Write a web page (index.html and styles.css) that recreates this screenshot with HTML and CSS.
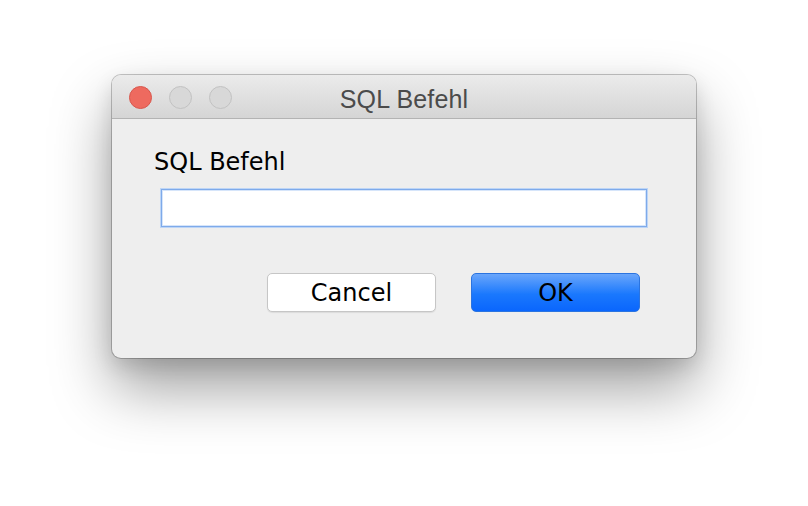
FILE: index.html
```html
<!DOCTYPE html>
<html>
<head>
<meta charset="utf-8">
<link rel="stylesheet" href="styles.css">
</head>
<body>
<div class="window">
  <div class="titlebar">
    <div class="lights">
      <span class="light close"></span>
      <span class="light off"></span>
      <span class="light off"></span>
    </div>
    <div class="title">SQL Befehl</div>
  </div>
  <div class="content">
    <div class="label">SQL Befehl</div>
    <div class="field"></div>
    <div class="buttons">
      <button class="btn cancel">Cancel</button>
      <button class="btn ok">OK</button>
    </div>
  </div>
</div>
</body>
</html>
```
FILE: styles.css
```css
html, body {
  margin: 0;
  padding: 0;
  background: #ffffff;
}
body {
  width: 808px;
  height: 506px;
  overflow: hidden;
  display: flex;
  justify-content: center;
  align-items: flex-start;
  padding-top: 75px;
  box-sizing: border-box;
}
.window {
  width: 584px;
  height: 283px;
  background: #eeeeee;
  border-radius: 9px;
  box-shadow: 0 0 0 1px rgba(0,0,0,0.22), 0 30px 60px rgba(0,0,0,0.38), 0 8px 20px rgba(0,0,0,0.12);
  display: flex;
  flex-direction: column;
  overflow: hidden;
}
.titlebar {
  position: relative;
  height: 43px;
  flex: none;
  background: linear-gradient(#ebebeb, #d5d5d5);
  border-bottom: 1px solid #b3b3b3;
  display: flex;
  align-items: center;
}
.lights {
  display: flex;
  gap: 17px;
  padding-left: 17px;
  padding-top: 2px;
}
.light {
  width: 23px;
  height: 23px;
  border-radius: 50%;
  box-sizing: border-box;
}
.light.close {
  background: #ee6a5f;
  border: 1px solid #d8574d;
}
.light.off {
  background: #d8d8d8;
  border: 1px solid #c2c2c2;
}
.title {
  position: absolute;
  left: 0;
  right: 0;
  top: 2px;
  line-height: 45px;
  text-align: center;
  font-family: "Liberation Sans", Arial, sans-serif;
  font-size: 25px;
  letter-spacing: 0.15px;
  color: #4b4b4b;
}
.content {
  padding: 29px 49px 0 49px;
  display: flex;
  flex-direction: column;
}
.label {
  font-family: "DejaVu Sans", sans-serif;
  font-size: 24px;
  line-height: 28px;
  color: #000000;
  margin-left: -7px;
}
.field {
  margin-top: 13px;
  height: 38px;
  background: #ffffff;
  border: 1px solid #7eaaea;
  box-sizing: border-box;
  box-shadow: 0 0 0 1px #bdd5f6, inset 0 0 0 1px #d6e5fa;
}
.buttons {
  margin-top: 46px;
  display: flex;
  justify-content: flex-end;
  gap: 35px;
  padding-right: 7px;
}
.btn {
  width: 169px;
  height: 39px;
  border-radius: 5px;
  font-family: "DejaVu Sans", sans-serif;
  font-size: 24px;
  color: #000000;
  padding: 0;
  box-sizing: border-box;
}
.btn.cancel {
  background: #ffffff;
  border: 1px solid #c6c6c6;
  box-shadow: 0 1px 1px rgba(0,0,0,0.08);
}
.btn.ok {
  background: linear-gradient(#6aa6fb, #1a78fd 55%, #0a66fd);
  border: 1px solid #2b74e0;
}
```
